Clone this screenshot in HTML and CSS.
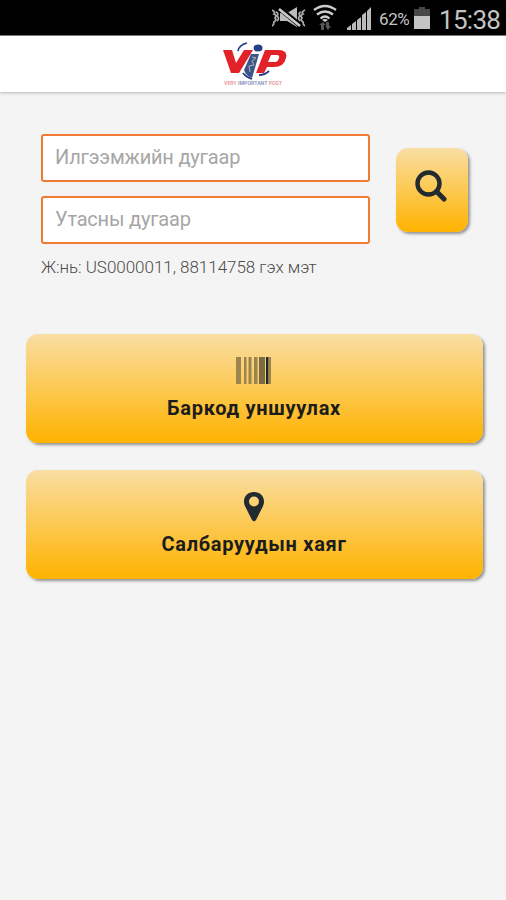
FILE: index.html
```html
<!DOCTYPE html>
<html lang="mn">
<head>
<meta charset="utf-8">
<title>VIP</title>
<link rel="stylesheet" href="styles.css">
</head>
<body>
<div class="status">
  <svg class="icons" width="104" height="35" viewBox="0 0 104 35">
    <g fill="none" stroke="#aaa" stroke-width="1.8">
      <path d="M0 10q4 2 2 4 3 1 1 4 2 2-1 4 0 3-2 4M4 12q3 1 1 4 3 2 0 5M33 10q-4 2-2 4-3 1-1 4-2 2 1 4 0 3 2 4M29 12q-3 1-1 4-3 2 0 5"/>
    </g>
    <path fill="#bbb" d="M8 13h7l10-6v20l-10-6H8z"/>
    <path stroke="#000" stroke-width="5" d="M9 9.500l18 15"/>
    <path stroke="#ccc" stroke-width="2.600" d="M7 9l21 17"/>
    <g fill="none" stroke="#ccc" stroke-width="2.300">
      <path d="M42 10q11-8 22 0M45 14.500q8-6 16 0M48.500 18.500q4.500-4 9 0"/>
    </g>
    <path fill="#ccc" d="M50 20q3-2 6 0l-3 2z"/>
    <path fill="#555" d="M51 22l3 3h-2v5h-3v-5h-2zM54 22h3v4h2l-3 4-3-4h1z"/>
    <path fill="#bbb" d="M75 30v-2l4-3v5zM80 30v-6l4-3v9zM85 30V20l4-3v13zM90 30V15l4-3v18zM95 30V11l4-4v23z"/>
  </svg>
  <span class="percent">62%</span>
  <span class="battery"></span>
  <span class="clock">15:38</span>
</div>
<header class="header">
  <svg width="64" height="44" viewBox="0 0 64 44">
    <path fill="none" stroke="#273f87" stroke-width="1.800" d="M24 1q-8 2-9 8M46 29q-4 4-10 4M20 31q3 4 9 6"/>
    <path fill="#e32227" d="M0 8h9l4 13 8-13h9L16 31H8z"/>
    <path fill="#e32227" fill-rule="evenodd" d="M42 8h13q10 0 8 8-2 9-12 9h-7l-3 6h-8zM48 13l-3 7h7q3 0 4-4 1-3-2-3z"/>
    <path fill="#3c568b" d="M28 12h8l-7 24q-6-2-8-8z"/>
    <path fill="none" stroke="#b5b9a0" d="M29 15l4 1-4 3 2 4-5 1 1 6"/>
    <ellipse cx="35" cy="6" rx="4.500" ry="3.500" fill="#273f87"/>
    <text x="1" y="43" font-size="5" textLength="58" lengthAdjust="spacingAndGlyphs"><tspan fill="#e58c91">VERY</tspan><tspan fill="#7d87b5"> IMPORTANT </tspan><tspan fill="#e58c91">POST</tspan></text>
  </svg>
</header>
<main class="main">
  <div class="search">
    <div class="fields">
      <input class="field" type="text" placeholder="Илгээмжийн дугаар">
      <input class="field" type="text" placeholder="Утасны дугаар">
      <p class="hint">Ж:нь: US0000011, 88114758 гэх мэт</p>
    </div>
    <button class="tile find" aria-label="search">
      <svg width="32" height="32" viewBox="0 0 32 32" fill="none" stroke="#222b2e">
        <circle cx="13.500" cy="13.500" r="11" stroke-width="4.400"/>
        <path d="M21.500 21.500l7.500 7.500" stroke-width="5" stroke-linecap="round"/>
      </svg>
    </button>
  </div>
  <button class="tile card">
    <svg width="36" height="28" viewBox="0 0 36 28">
      <path fill="#9c8450" d="M0 0h5v27H0zM8 0h2.500v27H8zM12.500 0h3v27h-3zM18 0h3.500v27H18zM33 0h2v27h-2z"/>
      <path fill="#7b6b43" d="M23 0h6v27h-6z"/>
      <path fill="#20282a" d="M30 0h2.500v27H30z"/>
    </svg>
    <span class="label">Баркод уншуулах</span>
  </button>
  <button class="tile card">
    <svg width="20" height="30" viewBox="0 0 20 30">
      <path fill="#222b30" fill-rule="evenodd" d="M10 0C4 0 0 4 0 9.500c0 2 .4 3.200 1.200 5L8 28q2 2.500 4 0l6.800-13.500c.8-1.800 1.200-3 1.200-5C20 4 16 0 10 0zM10 4.500a5 5 0 1 1 0 10 5 5 0 0 1 0-10z"/>
    </svg>
    <span class="label">Салбаруудын хаяг</span>
  </button>
</main>
</body>
</html>
```
FILE: styles.css
```css
* { box-sizing: border-box; }
body {
  margin: 0;
  height: 900px;
  background: #f4f4f4;
  font-family: Roboto, "Liberation Sans", sans-serif;
}
.status {
  display: flex;
  height: 35px;
  padding-right: 6px;
  justify-content: flex-end;
  background: #000;
  color: #c4c4c4;
}
.icons { margin-right: 3px; }
.percent { width: 35px; padding-top: 9px; font-size: 17px; line-height: 20px; letter-spacing: -.4px; }
.battery {
  width: 16px;
  height: 22px;
  margin: 7px 9px 0 0;
  background: linear-gradient(#484848 9px, #c4c4c4 9px);
  clip-path: polygon(0 2px, 5px 2px, 5px 0, 11px 0, 11px 2px, 100% 2px, 100% 100%, 0 100%);
}
.clock { width: 61px; padding-top: 5px; font-size: 26px; line-height: 30px; letter-spacing: -.7px; }
.header {
  display: flex;
  justify-content: center;
  height: 57px;
  padding-top: 6px;
  border-top: 1px solid #777;
  background: #fff;
  box-shadow: 0 1px 3px rgba(0,0,0,.25);
}
.header svg { margin-left: 3px; font-weight: 500; }
.main { padding: 42px 23px 0 26px; }
.search { display: flex; height: 200px; padding-left: 15px; }
.fields { width: 329px; }
.field {
  display: block;
  width: 100%;
  height: 48px;
  margin: 0 0 14px;
  padding: 0 12px 2px;
  border: 2.5px solid #ef7c32;
  border-radius: 3px;
  background: #fff;
  font: 20px/24px Roboto, sans-serif;
  letter-spacing: -.2px;
}
.field::placeholder { color: #a6a6a6; opacity: 1; }
.hint { margin: 0; font-size: 17px; font-weight: 300; line-height: 19px; letter-spacing: -.03px; color: #4c4c4c; white-space: nowrap; }
.tile {
  display: flex;
  padding: 0;
  border: 0;
  border-radius: 12px;
  background: linear-gradient(#f9dea3, #ffb300);
  box-shadow: 2px 2px 3px rgba(0,0,0,.4);
  color: #1c1c1c;
}
.find { width: 72px; height: 84px; margin: 14px 0 0 26px; padding: 22px 0 0 19px; }
.card {
  width: 457px;
  height: 109px;
  margin-bottom: 27px;
  padding: 22px 1px 0 0;
  flex-direction: column;
  align-items: center;
}
.card svg { flex: none; height: 30px; margin: 0 1px 10px 0; }
.label { font: 700 20px/24px Roboto, sans-serif; letter-spacing: .7px; }
```
